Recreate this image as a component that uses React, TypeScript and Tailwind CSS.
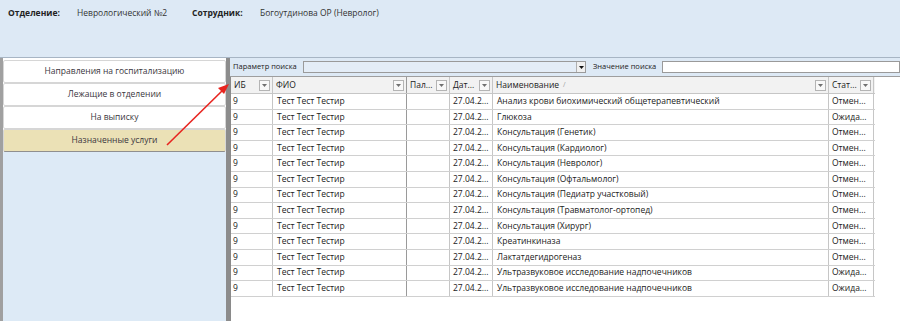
import React from 'react'

const rows = [
  ['Отмен...', 'Анализ крови биохимический общетерапевтический'],
  ['Ожида...', 'Глюкоза'],
  ['Отмен...', 'Консультация (Генетик)'],
  ['Отмен...', 'Консультация (Кардиолог)'],
  ['Отмен...', 'Консультация (Невролог)'],
  ['Отмен...', 'Консультация (Офтальмолог)'],
  ['Отмен...', 'Консультация (Педиатр участковый)'],
  ['Отмен...', 'Консультация (Травматолог-ортопед)'],
  ['Отмен...', 'Консультация (Хирург)'],
  ['Отмен...', 'Креатинкиназа'],
  ['Отмен...', 'Лактатдегидрогеназ'],
  ['Ожида...', 'Ультразвуковое исследование надпочечников'],
  ['Ожида...', 'Ультразвуковое исследование надпочечников'],
]

const menu = [
  'Направления на госпитализацию',
  'Лежащие в отделении',
  'На выписку',
  'Назначенные услуги',
]

function FilterBtn() {
  return (
    <span className="w-[11px] h-[11px] border border-[#b4b4b4] bg-[#f8f8f8] flex items-center justify-center shrink-0">
      <svg width="5" height="3" viewBox="0 0 5 3">
        <path d="M0 0h5L2.5 3z" fill="#707070" />
      </svg>
    </span>
  )
}

function HeadCell({ w, label, sort, dark }: { w: string; label: string; sort?: boolean; dark?: boolean }) {
  return (
    <div
      className={`${w} h-full flex items-center justify-between pl-[3px] pr-[2px] border-r ${
        dark ? 'border-[#9a9a9a]' : 'border-[#c6c6c6]'
      }`}
    >
      <span className="flex items-center gap-[4px]">
        <span>{label}</span>
        {sort && <span className="text-[7px] text-[#a0a0a0]">∕</span>}
      </span>
      <FilterBtn />
    </div>
  )
}

export default function App() {
  return (
    <div className="relative w-[900px] h-[321px] overflow-hidden bg-white font-['Open_Sans',sans-serif] text-[#222]">
      <header className="h-[57px] bg-[#dde9f5] flex items-start pt-[7px] pl-[8px] text-[8.5px]">
        <span className="font-bold w-[69px]">Отделение:</span>
        <span className="text-[#333] w-[115px]">Неврологический №2</span>
        <span className="font-bold w-[68px]">Сотрудник:</span>
        <span className="text-[#333]">Богоутдинова ОР (Невролог)</span>
      </header>

      <div className="flex h-[264px] border-t border-[#a7b5c4]">
        <aside className="w-[226px] flex flex-col border-l-[3px] border-[#a0a0a0] bg-[#ddeaf6]">
          <div className="flex flex-col bg-white pt-[2px]">
            {menu.map((item, i) => (
              <div
                key={item}
                className={`h-[23px] flex items-center justify-center text-[8.5px] text-[#3a3640] border border-[#d6d6d6] rounded-[2px] ${
                  i === 3 ? 'bg-[#ebe1b6] border-b-[#8f8f8f]' : 'bg-white'
                }`}
              >
                {item}
              </div>
            ))}
          </div>
        </aside>

        <div className="w-[4px] bg-[#8c8c8c]" />

        <main className="flex-1 flex flex-col">
          <div className="h-[19px] bg-[#dde9f5] flex items-center text-[7.5px] pl-[3px] border-b border-[#9e9e9e]">
            <span className="w-[70px]">Параметр поиска</span>
            <div className="w-[283px] h-[12px] border border-[#9a9a9a] bg-[#e4edf7] flex justify-end">
              <span className="w-[9px] h-full border-l border-[#b0b0b0] bg-[#f0f0f0] flex items-center justify-center">
                <svg width="5" height="3" viewBox="0 0 5 3">
                  <path d="M0 0h5L2.5 3z" fill="#111" />
                </svg>
              </span>
            </div>
            <span className="ml-[7px] w-[69px]">Значение поиска</span>
            <div className="flex-1 h-[12px] border border-[#9a9a9a] bg-white" />
          </div>

          <div className="flex-1 border-l border-[#8a8a8a] text-[8.5px]">
            <div className="flex h-[17px] border-b border-[#c6c6c6] bg-[#f2f2f2] w-[644px]">
              <HeadCell w="w-[42px]" label="ИБ" />
              <HeadCell w="w-[134px]" label="ФИО" dark />
              <HeadCell w="w-[43px]" label="Пал..." />
              <HeadCell w="w-[43px]" label="Дат..." />
              <HeadCell w="w-[336px]" label="Наименование" sort />
              <HeadCell w="w-[45px]" label="Стат..." />
            </div>
            {rows.map(([status, name], i) => (
              <div key={i} className="flex h-[15.6px] border-b border-[#d0d0d0] w-[644px] text-[#222]">
                <div className="w-[42px] pl-[2px] border-r border-[#c6c6c6] flex items-center">9</div>
                <div className="w-[134px] pl-[4px] border-r border-[#9a9a9a] flex items-center">Тест Тест Тестир</div>
                <div className="w-[43px] border-r border-[#c6c6c6]" />
                <div className="w-[43px] pl-[3px] border-r border-[#c6c6c6] flex items-center">27.04.2...</div>
                <div className="w-[336px] pl-[4px] border-r border-[#c6c6c6] flex items-center">{name}</div>
                <div className="w-[45px] pl-[3px] border-r border-[#c6c6c6] flex items-center">{status}</div>
              </div>
            ))}
          </div>
        </main>
      </div>

      <svg className="absolute left-0 top-0 pointer-events-none" width="900" height="321">
        <line x1="167" y1="145" x2="224" y2="89" stroke="#e8241f" strokeWidth="1.6" />
        <path d="M229 84 L218 88 L224 94 Z" fill="#e8241f" />
      </svg>
    </div>
  )
}
